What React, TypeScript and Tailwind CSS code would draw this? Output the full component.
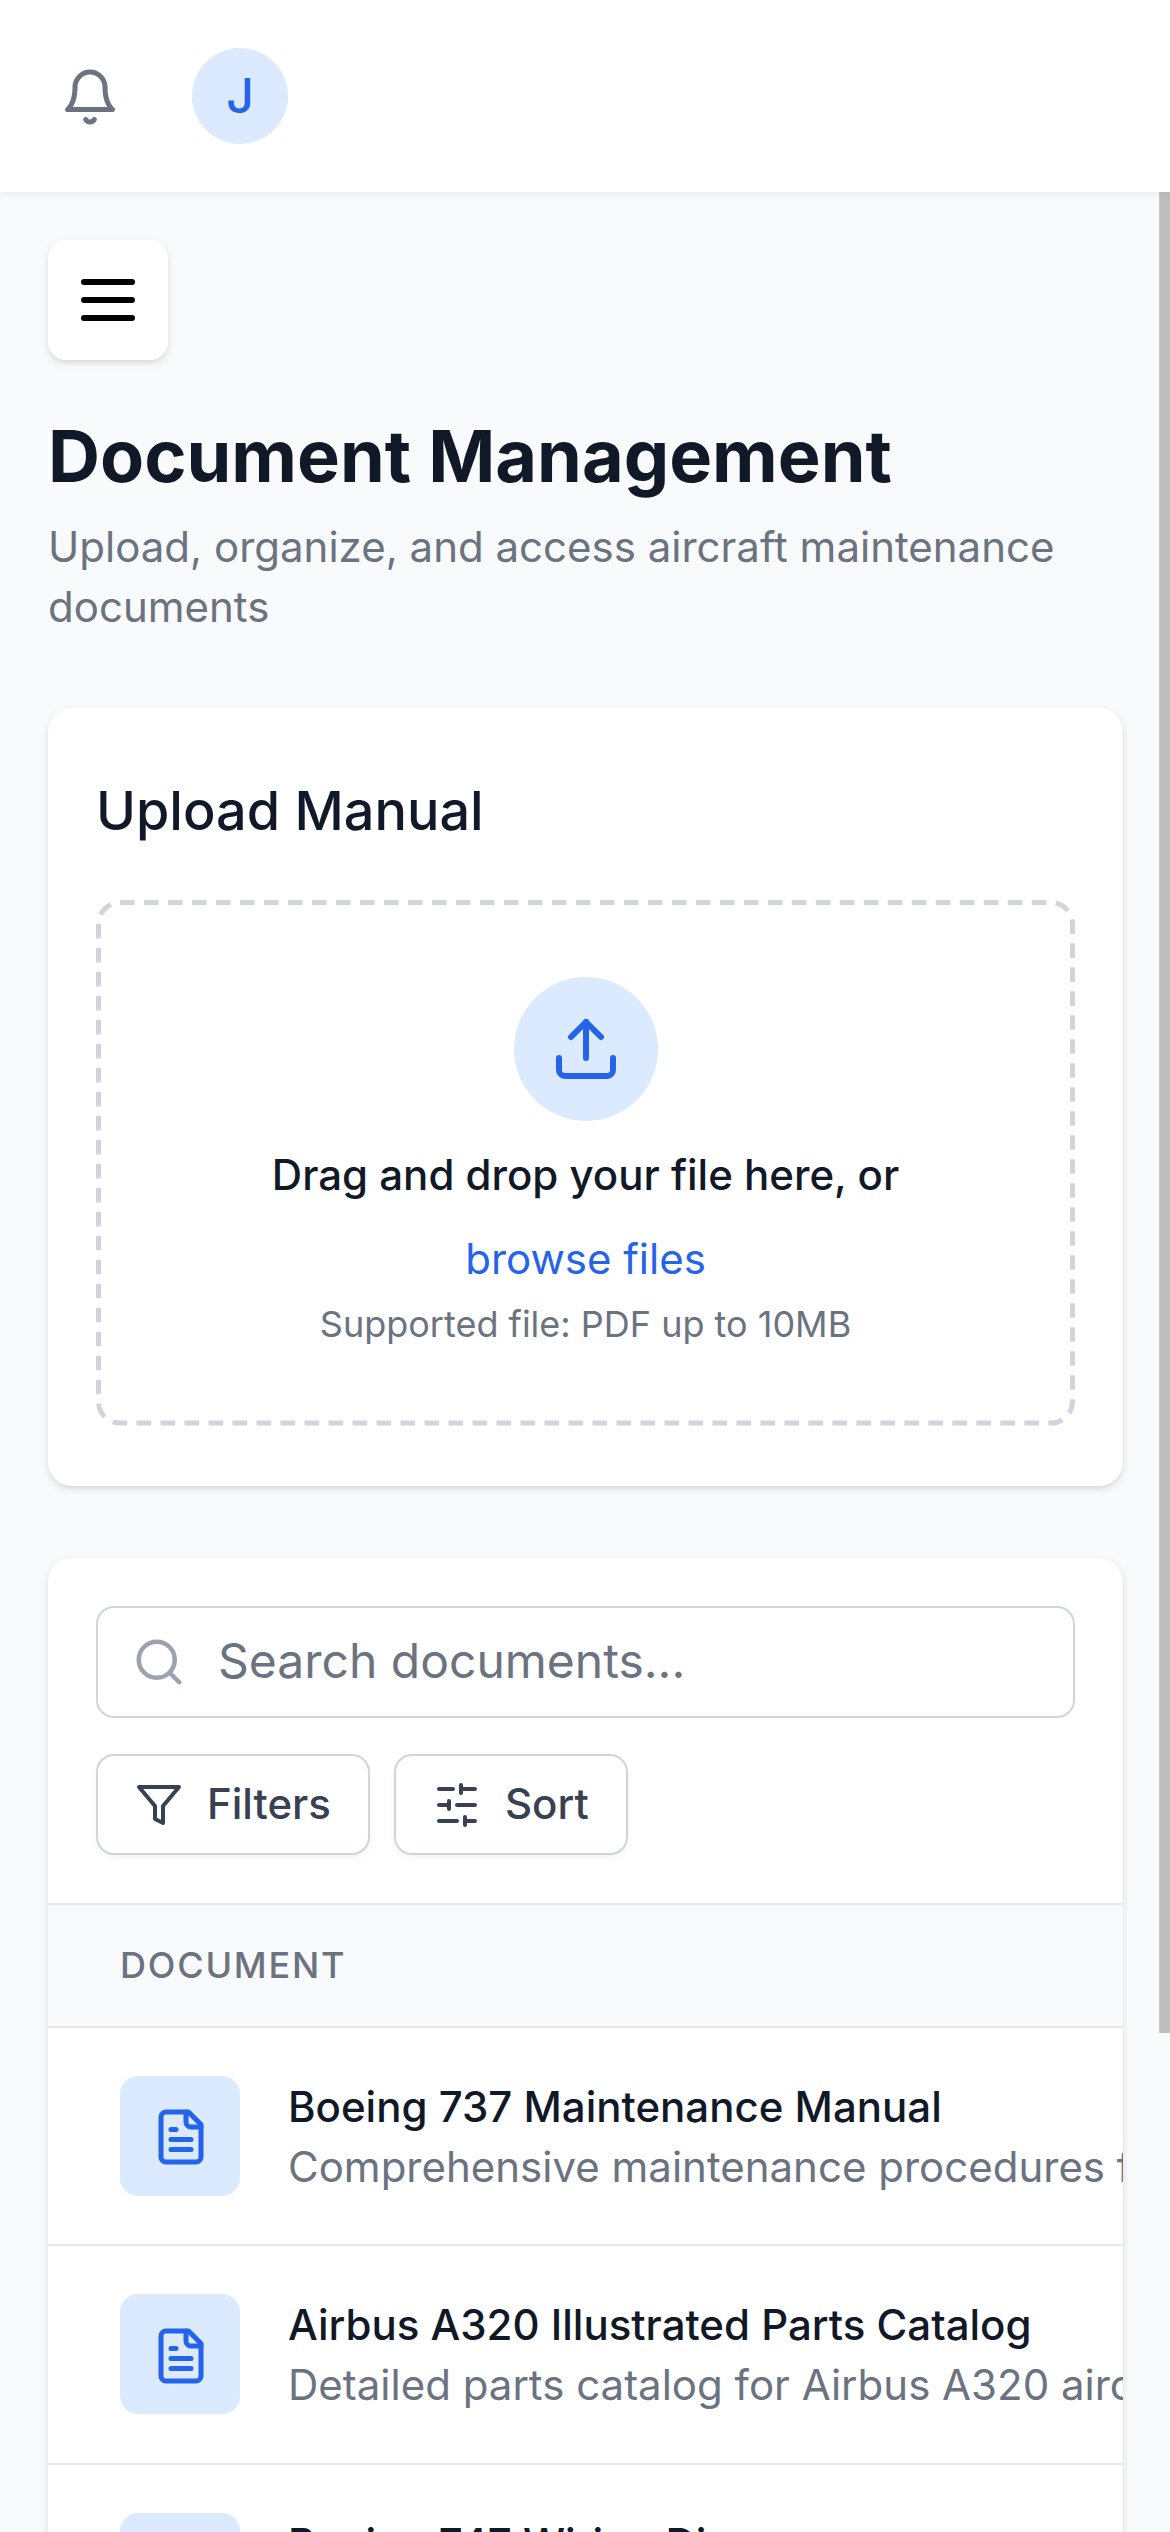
import React from "react";

type IconProps = { className?: string; children: React.ReactNode };

function Icon({ className = "", children }: IconProps) {
  return (
    <svg
      viewBox="0 0 24 24"
      fill="none"
      stroke="currentColor"
      strokeWidth={2}
      strokeLinecap="round"
      strokeLinejoin="round"
      className={`shrink-0 ${className}`}
    >
      {children}
    </svg>
  );
}

const documents = [
  {
    title: "Boeing 737 Maintenance Manual",
    description: "Comprehensive maintenance procedures for Boeing 737 aircraft",
  },
  {
    title: "Airbus A320 Illustrated Parts Catalog",
    description: "Detailed parts catalog for Airbus A320 aircraft",
  },
  {
    title: "Boeing 747 Wiring Diagrams",
    description: "Complete wiring diagrams for Boeing 747 aircraft",
  },
];

const cardClass =
  "w-[1075px] rounded-[24px] bg-white shadow-[0_3px_9px_0_rgba(0,0,0,0.1),0_3px_6px_-3px_rgba(0,0,0,0.1)]";

const toolButtonClass =
  "flex h-[100.8px] items-center gap-6 rounded-[18px] border-2 border-[#d1d5db] bg-white px-[37px] text-[42px] font-medium leading-[60px] text-[#374151] shadow-[0_3px_6px_0_rgba(0,0,0,0.05)]";

function Header() {
  return (
    <header className="relative z-10 flex h-[192px] shrink-0 items-center bg-white px-12 shadow-[0_3px_6px_0_rgba(0,0,0,0.05)]">
      <button className="px-3 pb-3 pt-3.5 text-[#6b7280]">
        <Icon className="block size-[60px]">
          <path d="M6 8a6 6 0 0 1 12 0c0 7 3 9 3 9H3s3-2 3-9" />
          <path d="M10.3 21a1.94 1.94 0 0 0 3.4 0" />
        </Icon>
      </button>
      <div className="ml-[60px] flex size-24 items-center justify-center rounded-full bg-[#dbeafe] text-[48px] font-medium leading-[72px] text-[#2563eb]">
        J
      </div>
    </header>
  );
}

function DashedFrame() {
  return (
    <svg
      viewBox="0 0 979 525.6"
      fill="none"
      className="pointer-events-none absolute inset-0 size-full text-[#d1d5db]"
    >
      <rect
        x="2.5"
        y="2.5"
        width="974"
        height="520.6"
        rx="21.5"
        stroke="currentColor"
        strokeWidth="5"
        pathLength={1230}
        strokeDasharray="6.1 3.9"
      />
    </svg>
  );
}

function UploadCard() {
  return (
    <section className={`${cardClass} mt-[71px] px-12 pb-[60px] pt-[61px]`}>
      <h2 className="text-[54px] font-medium leading-[84px] text-[#111827]">Upload Manual</h2>
      <div className="relative mt-[47px] flex h-[525.6px] flex-col items-center pt-[77px]">
        <DashedFrame />
        <div className="flex size-36 shrink-0 items-center justify-center rounded-full bg-[#dbeafe] text-[#2563eb]">
          <Icon className="size-[72px]">
            <path d="M21 15v4a2 2 0 0 1-2 2H5a2 2 0 0 1-2-2v-4" />
            <polyline points="17 8 12 3 7 8" />
            <line x1="12" x2="12" y1="3" y2="15" />
          </Icon>
        </div>
        <p className="mt-6 text-[42px] font-medium leading-[60px] text-[#111827]">
          Drag and drop your file here, or
        </p>
        <button className="mt-6 text-[42px] leading-[60px] text-[#2563eb]">browse files</button>
        <p className="mt-[11px] text-[36px] leading-[48px] text-[#6b7280]">
          Supported file: PDF up to 10MB
        </p>
      </div>
    </section>
  );
}

function Toolbar() {
  return (
    <div className="border-b-2 border-[#e5e7eb] p-12">
      <div className="flex h-[112.8px] items-center rounded-[18px] border-2 border-[#d1d5db] pl-[34px]">
        <Icon className="size-[54px] text-[#9ca3af]">
          <circle cx="11" cy="11" r="8" />
          <path d="m21 21-4.3-4.3" />
        </Icon>
        <input
          type="text"
          placeholder="Search documents..."
          className="mb-0.5 ml-8 min-w-0 flex-1 bg-transparent text-[48px] leading-[72px] outline-none placeholder:text-[#6b7280]"
        />
      </div>
      <div className="mt-9 flex gap-6">
        <button className={toolButtonClass}>
          <Icon className="size-12">
            <polygon points="22 3 2 3 10 12.46 10 19 14 21 14 12.46 22 3" />
          </Icon>
          <span className="mb-0.5">Filters</span>
        </button>
        <button className={toolButtonClass}>
          <Icon className="size-12">
            <path d="M21 4h-7M10 4H3M21 12h-9M8 12H3M21 20h-5M12 20H3M14 2v4M8 10v4M16 18v4" />
          </Icon>
          <span className="mb-0.5">Sort</span>
        </button>
      </div>
    </div>
  );
}

function DocumentRow({ title, description }: { title: string; description: string }) {
  return (
    <div className="flex h-[218.5px] border-b-2 border-[#e5e7eb] px-[72px] pt-12">
      <div className="flex size-[120px] shrink-0 items-center justify-center rounded-[18px] bg-[#dbeafe] pl-0.5 pt-[3px] text-[#2563eb]">
        <Icon className="size-[60px]">
          <path d="M15 2H6a2 2 0 0 0-2 2v16a2 2 0 0 0 2 2h12a2 2 0 0 0 2-2V7Z" />
          <path d="M14 2v4a2 2 0 0 0 2 2h4" />
          <path d="M10 9H8" />
          <path d="M16 13H8" />
          <path d="M16 17H8" />
        </Icon>
      </div>
      <div className="ml-12 whitespace-nowrap pt-px text-[42px] leading-[60px]">
        <div className="font-medium text-[#111827]">{title}</div>
        <div className="text-[#6b7280]">{description}</div>
      </div>
    </div>
  );
}

export default function App() {
  return (
    <div className="relative flex h-[2532px] w-[1170px] flex-col overflow-hidden bg-[#f9fafb] font-['Inter',sans-serif]">
      <Header />
      <main className="min-h-0 flex-1 overflow-hidden pl-12 pt-12">
        <button className="block rounded-[18px] bg-white p-6 text-black shadow-[0_3px_9px_0_rgba(0,0,0,0.1),0_3px_6px_-3px_rgba(0,0,0,0.1)]">
          <Icon className="block size-[72px]">
            <path d="M4 6h16M4 12h16M4 18h16" />
          </Icon>
        </button>
        <h1 className="mt-12 text-[72px] font-bold leading-[96px] text-[#111827]">
          Document Management
        </h1>
        <p className="mt-[13px] w-[1075px] text-[42px] leading-[60px] text-[#6b7280]">
          Upload, organize, and access aircraft maintenance documents
        </p>
        <UploadCard />
        <section className={`${cardClass} mt-[72px] overflow-hidden`}>
          <Toolbar />
          <div className="h-[122.8px] border-b-2 border-[#e5e7eb] bg-[#f9fafb] px-[72px] pt-9 text-[36px] font-medium uppercase leading-[48px] tracking-wider text-[#6b7280]">
            Document
          </div>
          {documents.map((doc) => (
            <DocumentRow key={doc.title} {...doc} />
          ))}
        </section>
      </main>
      <div className="absolute right-0 top-[192px] h-[1841px] w-[11px] border-l border-[#cacaca] bg-[#bdbdbd]" />
    </div>
  );
}
